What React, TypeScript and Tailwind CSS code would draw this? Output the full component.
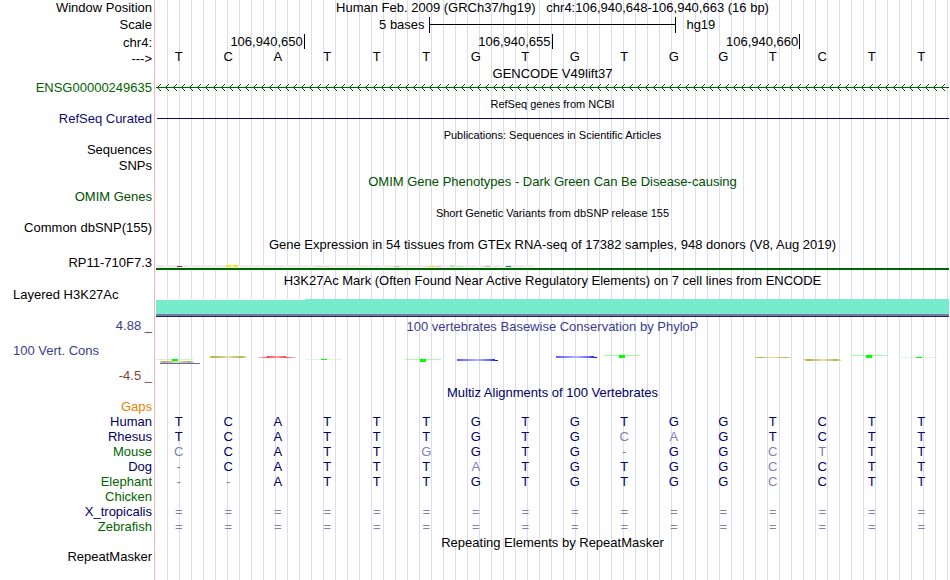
import type { ReactNode } from "react";

const SEQ = "TCATTTGTGTGGTCTT";

const SPECIES = [
  { name: "Human", color: "text-[#000064]", bases: "TCATTTGTGTGGTCTT" },
  { name: "Rhesus", color: "text-[#000064]", bases: "TCATTTGTGCAGTCTT" },
  { name: "Mouse", color: "text-[#006400]", bases: "CCATTGGTG-GGCTTT" },
  { name: "Dog", color: "text-[#000064]", bases: "-CATTTATGTGGCCTT" },
  { name: "Elephant", color: "text-[#006400]", bases: "--ATTTGTGTGGCCTT" },
  { name: "Chicken", color: "text-[#006400]", bases: "                " },
  { name: "X_tropicalis", color: "text-[#000064]", bases: "================" },
  { name: "Zebrafish", color: "text-[#006400]", bases: "================" },
];

// [x, width, height, color]
const GTEX: [number, number, number, string][] = [
  [21, 5, 1, "#8b1c62"],
  [70, 5, 2, "#eeee00"],
  [77, 5, 2, "#eeee00"],
  [161, 5, 1, "#eed5d2"],
  [168, 5, 1, "#eed5d2"],
  [238, 5, 1, "#cdb79e"],
  [273, 5, 1, "#ffd700"],
  [280, 5, 1, "#ffb6c1"],
  [294, 5, 2, "#b4eeb4"],
  [301, 5, 1, "#d9d9d9"],
  [329, 5, 1, "#cdb79e"],
  [350, 5, 1, "#008b45"],
];

function Row({
  label,
  color = "text-black",
  height = "h-4",
  left,
  ruler,
  children,
}: {
  label?: string;
  color?: string;
  height?: string;
  left?: boolean;
  ruler?: boolean;
  children?: ReactNode;
}) {
  return (
    <div className={`flex ${height}`}>
      <div
        className={`w-[154px] shrink-0 flex items-center whitespace-nowrap ${color} ${
          left ? "pl-[13px]" : "justify-end pr-0.5"
        } ${ruler ? "" : "pb-0.5"}`}
      >
        {label}
      </div>
      <div className="flex-1 min-w-0 pl-0.5 pr-px">{children}</div>
    </div>
  );
}

function Title({
  children,
  color = "text-black",
  small,
}: {
  children: ReactNode;
  color?: string;
  small?: boolean;
}) {
  return (
    <h2
      className={`h-full flex items-center justify-center whitespace-pre ${color} ${
        small ? "text-[11px]" : ""
      }`}
    >
      {children}
    </h2>
  );
}

function Tick({ span, children }: { span: string; children: ReactNode }) {
  return (
    <div className={`${span} h-[15px] flex items-center justify-end pr-px border-r border-black`}>
      {children}
    </div>
  );
}

function GeneArrows() {
  return (
    <svg className="block w-full h-4" shapeRendering="crispEdges">
      <defs>
        <pattern id="arrows" width="8" height="16" patternUnits="userSpaceOnUse">
          <path
            d="M1 7h1v1h-1zM2 6h1v1h-1zM2 8h1v1h-1zM3 5h1v1h-1zM3 9h1v1h-1zM4 4h1v1h-1zM4 10h1v1h-1z"
            fill="#006400"
          />
        </pattern>
      </defs>
      <rect width="100%" height="16" fill="url(#arrows)" />
      <rect y="7" width="100%" height="1" fill="#006400" />
    </svg>
  );
}

function Expression() {
  return (
    <svg className="block w-full h-[21px]" shapeRendering="crispEdges">
      <rect y="13" width="378" height="3" fill="#eeeeee" />
      {GTEX.map(([x, w, h, fill]) => (
        <rect key={x} x={x} y={15 - h} width={w} height={h} fill={fill} />
      ))}
      <rect y="16" width="100%" height="2" fill="#006400" />
    </svg>
  );
}

function Conservation() {
  return (
    <svg className="block w-full h-[34px]" shapeRendering="crispEdges">
      <defs>
        <linearGradient id="olive">
          <stop offset="0" stopColor="#d8d488" />
          <stop offset="0.12" stopColor="#b4b040" />
          <stop offset="0.5" stopColor="#e4e0a8" />
          <stop offset="0.85" stopColor="#b8b448" />
          <stop offset="1" stopColor="#e8e6c0" />
        </linearGradient>
        <linearGradient id="blue">
          <stop offset="0" stopColor="#5a5aff" />
          <stop offset="0.5" stopColor="#b4b4ff" />
          <stop offset="0.8" stopColor="#6464ff" />
          <stop offset="1" stopColor="#0000e0" />
        </linearGradient>
        <linearGradient id="red">
          <stop offset="0" stopColor="#ffc8c8" />
          <stop offset="0.25" stopColor="#ff4646" />
          <stop offset="0.5" stopColor="#ff9696" />
          <stop offset="0.75" stopColor="#ff4646" />
          <stop offset="1" stopColor="#ffc8c8" />
        </linearGradient>
      </defs>
      <rect x="1" y="25" width="36" height="1" fill="#c8f5c8" />
      <path d="M4 27h32l3 2h-35z" fill="url(#olive)" />
      <rect x="4" y="29" width="40" height="1" fill="#6464dc" />
      <rect x="16" y="25" width="6" height="2" fill="#00ff00" />
      <path d="M53 22h36l2 2h-37z" fill="url(#olive)" />
      <path d="M102 23h9v-1h19v1h10v1h-38z" fill="url(#red)" />
      <rect x="150" y="25" width="36" height="1" fill="#dcf8dc" />
      <rect x="165" y="25" width="6" height="1" fill="#00ff00" />
      <rect x="249" y="25" width="36" height="1" fill="#a0ffa0" />
      <rect x="264" y="25" width="6" height="3" fill="#00ff00" />
      <path d="M301 25h35l6 1v1h-41z" fill="url(#blue)" />
      <path d="M400 22h35l6 1v1h-41z" fill="url(#blue)" />
      <rect x="448" y="21" width="36" height="1" fill="#a0ffa0" />
      <rect x="463" y="21" width="6" height="3" fill="#00ff00" />
      <rect x="599" y="23" width="36" height="1" fill="url(#olive)" />
      <path d="M648 25h35l3 2h-37z" fill="url(#olive)" />
      <rect x="695" y="21" width="36" height="1" fill="#a0ffa0" />
      <rect x="710" y="21" width="6" height="3" fill="#00ff00" />
      <rect x="745" y="23" width="36" height="1" fill="#dcf8dc" />
      <rect x="760" y="23" width="6" height="1" fill="#00ff00" />
    </svg>
  );
}

function Alignment() {
  return (
    <table className="w-full table-fixed border-collapse">
      <colgroup>
        <col className="w-[154px]" />
        {SEQ.split("").map((_, i) => (
          <col key={i} />
        ))}
        <col className="w-1" />
      </colgroup>
      <tbody>
        {SPECIES.map(({ name, color, bases }) => (
          <tr key={name} className="h-[15px]">
            <th scope="row" className={`p-0 pr-0.5 text-right font-normal ${color}`}>
              {name}
            </th>
            {bases.split("").map((b, i) => (
              <td
                key={i}
                className={`p-0 text-center ${b === SEQ[i] ? "text-[#000064]" : "text-[#8080b4]"}`}
              >
                {b}
              </td>
            ))}
            <td className="p-0" />
          </tr>
        ))}
      </tbody>
    </table>
  );
}

export default function App() {
  return (
    <main className="min-h-screen overflow-hidden bg-white font-['Liberation_Sans',sans-serif] text-[13px] leading-[15px] text-black bg-no-repeat bg-[position:154px_0] bg-[image:linear-gradient(to_right,#ffb4b4_1px,#fff_1px,#fff_12px,transparent_12px),repeating-linear-gradient(to_right,#fff_0px,#fff_1px,#dcdcf5_1px,#dcdcf5_2px,#fff_2px,#fff_12px)]">
      <Row label="Window Position" height="h-[15px]" ruler>
        <Title>{"Human Feb. 2009 (GRCh37/hg19)   chr4:106,940,648-106,940,663 (16 bp)"}</Title>
      </Row>
      <Row label="Scale" height="h-[19px]" ruler>
        <div className="h-full grid grid-cols-[5.5fr_5fr_5.5fr] items-center">
          <span className="text-right pr-1">5 bases</span>
          <div className="h-4 flex items-center border-x border-black">
            <div className="h-px w-full bg-black" />
          </div>
          <span className="pl-2.5">hg19</span>
        </div>
      </Row>
      <Row label="chr4:" ruler>
        <div className="grid grid-cols-16">
          <Tick span="col-span-3">106,940,650</Tick>
          <Tick span="col-span-5">106,940,655</Tick>
          <Tick span="col-span-5">106,940,660</Tick>
        </div>
      </Row>
      <Row label="--->" height="h-4" ruler>
        <div className="-ml-0.5 pr-[3px] grid grid-cols-16 text-center leading-[13px]">
          {SEQ.split("").map((b, i) => (
            <span key={i}>{b}</span>
          ))}
        </div>
      </Row>

      <Row height="h-[14px]">
        <Title>GENCODE V49lift37</Title>
      </Row>
      <Row label="ENSG00000249635" color="text-[#006400]">
        <GeneArrows />
      </Row>
      <Row>
        <Title small>RefSeq genes from NCBI</Title>
      </Row>
      <Row label="RefSeq Curated" color="text-[#0c0c78]" height="h-[15px]">
        <div className="h-full pt-1.5">
          <div className="ml-px h-px bg-[#0c0c78]" />
        </div>
      </Row>
      <Row>
        <Title small>Publications: Sequences in Scientific Articles</Title>
      </Row>
      <Row label="Sequences" height="h-[15px]" />
      <Row label="SNPs" />
      <Row height="h-[15px]">
        <Title color="text-[#005000]">
          OMIM Gene Phenotypes - Dark Green Can Be Disease-causing
        </Title>
      </Row>
      <Row label="OMIM Genes" color="text-[#005000]" />
      <Row>
        <Title small>Short Genetic Variants from dbSNP release 155</Title>
      </Row>
      <Row label="Common dbSNP(155)" height="h-[15px]" />
      <Row>
        <Title>
          Gene Expression in 54 tissues from GTEx RNA-seq of 17382 samples, 948 donors (V8, Aug 2019)
        </Title>
      </Row>
      <Row label="RP11-710F7.3" height="h-[21px]" ruler>
        <Expression />
      </Row>
      <Row height="h-[15px]">
        <Title>
          H3K27Ac Mark (Often Found Near Active Regulatory Elements) on 7 cell lines from ENCODE
        </Title>
      </Row>
      <Row label="Layered H3K27Ac" left height="h-[15px]">
        <svg className="block w-full h-[30px]" shapeRendering="crispEdges">
          <rect y="11" width="100%" height="15" fill="#78ebcd" />
          <rect y="11" width="149" height="1" fill="#fff" />
          <rect y="26" width="100%" height="2" fill="#7878aa" />
          <rect y="28" width="100%" height="1" fill="#14285a" />
        </svg>
      </Row>
      <Row height="h-[15px]" />
      <Row label="4.88 _" color="text-[#3c3c8c]">
        <Title color="text-[#3c3c8c]">100 vertebrates Basewise Conservation by PhyloP</Title>
      </Row>
      <Row label="100 Vert. Cons" color="text-[#3c3c8c]" left height="h-[34px]">
        <Conservation />
      </Row>
      <Row label="-4.5 _" color="text-[#8c3c3c]" />

      <Row>
        <Title color="text-[#000064]">Multiz Alignments of 100 Vertebrates</Title>
      </Row>
      <Row label="Gaps" color="text-[#e68200]" height="h-[14px]" />
      <Alignment />
      <Row>
        <Title>Repeating Elements by RepeatMasker</Title>
      </Row>
      <Row label="RepeatMasker" height="h-[15px]" />
    </main>
  );
}
